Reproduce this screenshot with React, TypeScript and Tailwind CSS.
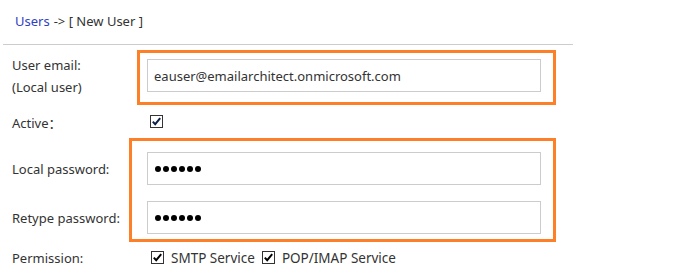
import React from "react";

const font = { fontFamily: '"Noto Sans", "Noto Sans CJK SC", sans-serif' };

function Box({ blue = false }: { blue?: boolean }) {
  return (
    <svg width="13" height="13" viewBox="0 0 13 13" className="shrink-0">
      <rect x="0.5" y="0.5" width="12" height="12" fill="#fff" stroke="#333" />
      <path
        d="M2.8 6.6 L5.2 9.2 L10.2 3.2"
        fill="none"
        stroke={blue ? "#0b1f4a" : "#000"}
        strokeWidth="2"
      />
    </svg>
  );
}

function Dots() {
  return (
    <div className="flex gap-[2px] items-center">
      {[0, 1, 2, 3, 4, 5].map((i) => (
        <div key={i} className="w-[6px] h-[6px] rounded-full bg-black" />
      ))}
    </div>
  );
}

export default function App() {
  return (
    <div
      className="w-[680px] h-[273px] bg-white text-[13px] text-[#333] overflow-hidden"
      style={font}
    >
      <div className="ml-[3px] w-[570px] h-[45px] border-b border-[#cccccc] flex items-center pl-[12px] text-[13px]">
        <span className="text-[#2e3fc4]">Users</span>
        <span className="ml-[4px]">-&gt; [ New User ]</span>
      </div>

      <div className="flex mt-[5px]">
        <div className="w-[137px] pl-[12px] pt-[4px] leading-[22px]">
          <div>User email:</div>
          <div>(Local user)</div>
        </div>
        <div className="w-[419px] h-[55px] border-[3px] border-[#fd7f28] pl-[7px] pr-[12px] pt-[6px]">
          <input
            readOnly
            value="eauser@emailarchitect.onmicrosoft.com"
            className="w-[394px] h-[33px] border border-[#cccccc] px-[6px] text-[13px] text-[#333] outline-none"
            style={font}
          />
        </div>
      </div>

      <div className="flex items-center h-[33px] mt-[0px]">
        <div className="w-[150px] pl-[12px] pt-[4px]">Active：</div>
        <Box blue />
      </div>

      <div className="flex">
        <div className="w-[129px] pl-[12px] pt-[14px] leading-[22px]">
          <div className="h-[33px] flex items-center">Local password:</div>
          <div className="h-[33px] flex items-center mt-[16px]">Retype password:</div>
        </div>
        <div className="w-[427px] h-[104px] border-[3px] border-[#fd7f28] pl-[15px] pr-[12px] pt-[11px]">
          <div className="w-[394px] h-[33px] border border-[#cccccc] pl-[7px] flex items-center">
            <Dots />
          </div>
          <div className="w-[394px] h-[33px] border border-[#cccccc] pl-[7px] flex items-center mt-[16px]">
            <Dots />
          </div>
        </div>
      </div>

      <div className="flex items-center h-[31px]">
        <div className="w-[151px] pl-[12px] pt-[2px]">Permission:</div>
        <Box />
        <span className="ml-[7px] pt-[2px] text-[13.5px]">SMTP Service</span>
        <span className="ml-[7px]"><Box /></span>
        <span className="ml-[7px] pt-[2px] text-[13.5px]">POP/IMAP Service</span>
      </div>
    </div>
  );
}
